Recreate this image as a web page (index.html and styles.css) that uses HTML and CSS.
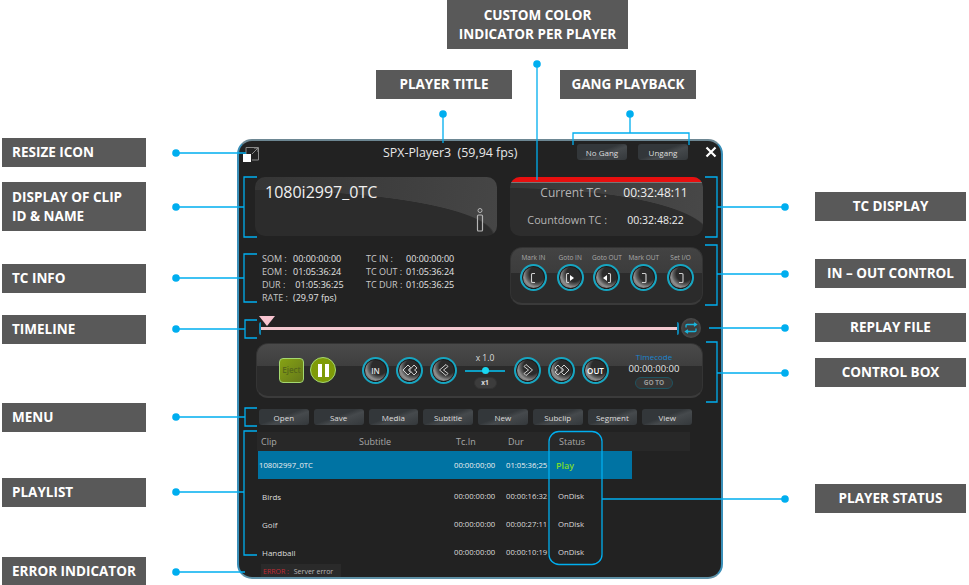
FILE: index.html
```html
<!DOCTYPE html>
<html lang="en">
<head>
  <meta charset="UTF-8">
  <title>SPX Player overview</title>
  <link rel="stylesheet" href="styles.css">
</head>
<body>
<div class="stage">

  <!-- Player window -->
  <div class="player">
    <div class="titlebar">
      <svg class="resize-icon" width="18" height="18" viewBox="0 0 18 18">
        <path d="M3 1.5H15.5V14H9M3 8V1.5M9 8L15 2M11 2H15V6" fill="none" stroke="#8a8a8a" stroke-width="1"/>
        <rect x="0" y="8" width="8" height="8" fill="#fff"/>
      </svg>
      <span class="player-name">SPX-Player3&nbsp; (59,94 fps)</span>
      <button class="btn gang">No Gang</button>
      <button class="btn gang">Ungang</button>
      <svg class="close" width="12" height="12" viewBox="0 0 12 12">
        <path d="M1.5 1.5L10.5 10.5M10.5 1.5L1.5 10.5" stroke="#fff" stroke-width="2.2"/>
      </svg>
    </div>

    <div class="panels">
      <div class="panel clip-panel">
        <span class="clip-name">1080i2997_0TC</span>
        <svg class="info-icon" width="8" height="24" viewBox="0 0 8 24">
          <circle cx="4" cy="2.5" r="2" fill="none" stroke="#b5b5b5" stroke-width="1"/>
          <rect x="1.5" y="7" width="5" height="16" rx="1" fill="none" stroke="#b5b5b5" stroke-width="1.2"/>
        </svg>
      </div>

      <div class="panel tc-panel">
        <div class="color-bar"></div>
        <div class="tc-rows">
          <span class="tc-label big">Current TC :</span><span class="tc-val big">00:32:48:11</span>
          <span class="tc-label">Countdown TC :</span><span class="tc-val">00:32:48:22</span>
        </div>
      </div>

      <div class="tc-info">
        <span>SOM :</span><span>00:00:00:00</span><span>TC IN :</span><span>00:00:00:00</span>
        <span>EOM :</span><span>01:05:36:24</span><span>TC OUT :</span><span>01:05:36:24</span>
        <span>DUR :</span><span>&nbsp;01:05:36:25</span><span>TC DUR :</span><span>01:05:36:25</span>
        <span>RATE :</span><span>(29,97 fps)</span>
      </div>

      <div class="panel inout-panel">
        <div class="inout-item">
          <span>Mark IN</span>
          <div class="round"><svg width="14" height="14" viewBox="0 0 14 14"><path d="M9 2.5H6.500a1 1 0 0 0-1 1v7a1 1 0 0 0 1 1H9" class="glyph"/></svg></div>
        </div>
        <div class="inout-item">
          <span>Goto IN</span>
          <div class="round"><svg width="14" height="14" viewBox="0 0 14 14"><path d="M6 2.500H4.500a1 1 0 0 0-1 1v7a1 1 0 0 0 1 1H6" class="glyph"/><path d="M7 4L11 7L7 10Z" fill="#fff"/></svg></div>
        </div>
        <div class="inout-item">
          <span>Goto OUT</span>
          <div class="round"><svg width="14" height="14" viewBox="0 0 14 14"><path d="M8 2.500h1.500a1 1 0 0 1 1 1v7a1 1 0 0 1-1 1H8" class="glyph"/><path d="M7 4L3 7L7 10Z" fill="#fff"/></svg></div>
        </div>
        <div class="inout-item">
          <span>Mark OUT</span>
          <div class="round"><svg width="14" height="14" viewBox="0 0 14 14"><path d="M5 2.500h3a1 1 0 0 1 1 1v7a1 1 0 0 1-1 1H5" class="glyph"/></svg></div>
        </div>
        <div class="inout-item">
          <span>Set I/O</span>
          <div class="round"><svg width="14" height="14" viewBox="0 0 14 14"><path d="M5 2.500h3a1 1 0 0 1 1 1v7a1 1 0 0 1-1 1H5" class="glyph"/></svg></div>
        </div>
      </div>
    </div>

    <!-- Timeline -->
    <div class="timeline">
      <span class="playhead"></span>
      <span class="cap"></span>
      <span class="track"></span>
      <span class="cap cap-end"></span>
      <div class="replay">
        <svg width="14" height="12" viewBox="0 0 14 12">
          <path d="M2 5.500V3.500a1 1 0 0 1 1-1h9M10 .8L12.500 2.500L10 4.200M12 6.500v2a1 1 0 0 1-1 1H2M4 7.800L1.500 9.500L4 11.200" fill="none" stroke="#19b5dc" stroke-width="1.300"/>
        </svg>
      </div>
    </div>

    <!-- Control box -->
    <div class="control-box">
      <div class="eject">Eject</div>
      <div class="pause"><i></i><i></i></div>
      <div class="round first-transport"><span class="round-text">IN</span></div>
      <div class="round"><svg width="18" height="14" viewBox="0 0 18 14"><path d="M7 2L2 7L7 12L9.500 9.500L7.500 7L9.500 4.500ZM13 2L8.500 7L13 12L16 9L13.500 7L16 5Z" class="glyph thin"/></svg></div>
      <div class="round"><svg width="14" height="14" viewBox="0 0 14 14"><path d="M9 1.500L2.500 7L9 12.500L11 10.500L6.500 7L11 3.500Z" class="glyph thin"/></svg></div>
      <div class="speed">
        <span>x 1.0</span>
        <div class="slider"><b></b></div>
        <span class="pill">x1</span>
      </div>
      <div class="round"><svg width="14" height="14" viewBox="0 0 14 14"><path d="M5 1.500L11.500 7L5 12.500L3 10.500L7.500 7L3 3.500Z" class="glyph thin"/></svg></div>
      <div class="round"><svg width="18" height="14" viewBox="0 0 18 14"><path d="M11 2L16 7L11 12L8.500 9.500L10.500 7L8.500 4.500ZM5 2L9.500 7L5 12L2 9L4.500 7L2 5Z" class="glyph thin"/></svg></div>
      <div class="round"><span class="round-text out">OUT</span></div>
      <div class="timecode">
        <span class="tc-title">Timecode</span>
        <span class="tc-now">00:00:00:00</span>
        <span class="goto">GO TO</span>
      </div>
    </div>

    <!-- Menu -->
    <div class="menu">
      <button class="btn">Open</button>
      <button class="btn">Save</button>
      <button class="btn">Media</button>
      <button class="btn">Subtitle</button>
      <button class="btn">New</button>
      <button class="btn">Subclip</button>
      <button class="btn">Segment</button>
      <button class="btn">View</button>
    </div>

    <!-- Playlist -->
    <div class="playlist">
      <div class="row head">
        <span>Clip</span><span>Subtitle</span><span>Tc.In</span><span>Dur</span><span>Status</span>
      </div>
      <div class="row selected">
        <span>1080i2997_0TC</span><span></span><span>00:00:00;00</span><span>01:05:36;25</span><span class="play">Play</span>
      </div>
      <div class="row item">
        <span>Birds</span><span></span><span>00:00:00:00</span><span>00:00:16:32</span><span>OnDisk</span>
      </div>
      <div class="row item">
        <span>Golf</span><span></span><span>00:00:00:00</span><span>00:00:27:11</span><span>OnDisk</span>
      </div>
      <div class="row item">
        <span>Handball</span><span></span><span>00:00:00:00</span><span>00:00:10:19</span><span>OnDisk</span>
      </div>
    </div>

    <div class="error"><em>ERROR :</em> Server error</div>
  </div>

  <!-- Callout lines drawn over the window -->
  <svg class="callouts" width="969" height="585" viewBox="0 0 969 585">
    <path class="line" d="M176 153H246 M176 207H244 M257 177H244V237H257 M176 278H244 M257 254H244V302H257 M176 329H245 M257 320H245V338H257 M176 417H245 M257 408H245V426H257 M176 492H244 M257 431H244V555H257 M176 572H245"/>
    <path class="line" d="M785 207H717 M705 177H717V237H705 M785 274H717 M705 245H717V305H705 M785 328H709 M785 373H717 M706 342H717V402H706 M785 499H602"/>
    <path class="line" d="M443 114V143 M537 64V180 M630 114V133 M573 145V133H689V145"/>
    <rect class="line" x="549" y="431.500" width="53" height="133" rx="10"/>
    <g class="dots">
      <circle cx="176" cy="153" r="3.800"/><circle cx="176" cy="207" r="3.800"/><circle cx="176" cy="278" r="3.800"/>
      <circle cx="176" cy="329" r="3.800"/><circle cx="176" cy="417" r="3.800"/><circle cx="176" cy="492" r="3.800"/>
      <circle cx="176" cy="572" r="3.800"/>
      <circle cx="785" cy="207" r="3.800"/><circle cx="785" cy="274" r="3.800"/><circle cx="785" cy="328" r="3.800"/>
      <circle cx="785" cy="373" r="3.800"/><circle cx="785" cy="499" r="3.800"/>
      <circle cx="443" cy="114" r="3.800"/><circle cx="537" cy="64" r="3.800"/><circle cx="630" cy="114" r="3.800"/>
    </g>
  </svg>

  <!-- Labels -->
  <div class="label l-custom center">CUSTOM COLOR<br>INDICATOR PER PLAYER</div>
  <div class="label l-title center">PLAYER TITLE</div>
  <div class="label l-gang center">GANG PLAYBACK</div>

  <div class="label l-resize">RESIZE ICON</div>
  <div class="label l-display">DISPLAY OF CLIP<br>ID &amp; NAME</div>
  <div class="label l-tcinfo">TC INFO</div>
  <div class="label l-timeline">TIMELINE</div>
  <div class="label l-menu">MENU</div>
  <div class="label l-playlist">PLAYLIST</div>
  <div class="label l-error">ERROR INDICATOR</div>

  <div class="label side l-tcdisplay">TC DISPLAY</div>
  <div class="label side l-inout">IN – OUT CONTROL</div>
  <div class="label side l-replay">REPLAY FILE</div>
  <div class="label side l-control">CONTROL BOX</div>
  <div class="label side l-status">PLAYER STATUS</div>
</div>
</body>
</html>
```

FILE: styles.css
```css
body {
  margin: 0;
  background-color: #fff;
  font-family: "Open Sans", "Liberation Sans", sans-serif;
}
.stage {
  position: relative;
  width: 969px;
  height: 585px;
  overflow: hidden;
}

/* labels around the window */
.label {
  position: absolute;
  left: 2px;
  width: 144px;
  height: 29px;
  box-sizing: border-box;
  padding-left: 10px;
  background-color: #595959;
  color: #fff;
  font-size: 13.5px;
  font-weight: 700;
  line-height: 19px;
  white-space: nowrap;
  display: flex;
  align-items: center;
}
.label.center {
  justify-content: center;
  text-align: center;
  padding-left: 0;
}
.label.side {
  left: 815px;
  width: 151px;
  padding-left: 0;
  justify-content: center;
}
.l-custom { left: 447px; top: 0; width: 181px; height: 49px; }
.l-title { left: 376px; top: 70px; width: 136px; }
.l-gang { left: 560px; top: 70px; width: 136px; }
.l-resize { top: 138px; }
.l-display { top: 182px; height: 49px; }
.l-tcinfo { top: 264px; }
.l-timeline { top: 315px; }
.l-menu { top: 403px; }
.l-playlist { top: 478px; }
.l-error { top: 557px; }
.l-tcdisplay { top: 192px; }
.l-inout { top: 259px; }
.l-replay { top: 313px; }
.l-control { top: 358px; }
.l-status { top: 484px; }

.callouts {
  position: absolute;
  left: 0;
  top: 0;
  pointer-events: none;
}
.line {
  fill: none;
  stroke: #00aeef;
  stroke-width: 1.3;
}
.dots circle {
  fill: #00aeef;
}

/* player window */
.player {
  position: absolute;
  left: 237px;
  top: 139px;
  width: 486px;
  height: 440px;
  box-sizing: border-box;
  border: 2px solid #3a8fb8;
  border-top-color: #6d8793;
  border-bottom-color: #5f92a8;
  border-radius: 15px;
  background-color: #222;
  color: #d5d5d5;
  overflow: hidden;
}
.titlebar {
  display: flex;
  align-items: center;
  height: 31px;
  padding: 0 0 9px 4px;
  box-sizing: border-box;
}
.resize-icon {
  flex: none;
  margin-top: 5px;
}
.player-name {
  margin-left: 122px;
  width: 194px;
  font-size: 12.4px;
  color: #e8e8e8;
  white-space: nowrap;
}
.close {
  margin-left: 6px;
}
.btn {
  padding: 0;
  height: 16px;
  border: none;
  border-radius: 3px;
  background: linear-gradient(160deg, #33373a 0 45%, #464a4d 60%, #34383b 100%);
  color: #ddd;
  font-family: "Open Sans", "Liberation Sans", sans-serif;
  font-size: 8px;
}
.gang {
  flex: none;
  width: 50px;
  margin-right: 11px;
}

.panels {
  display: grid;
  grid-template-columns: 242px 193px;
  grid-template-rows: 59px 58px;
  column-gap: 13px;
  row-gap: 11px;
  margin: 5px 0 0 16px;
}
.panel {
  border-radius: 10px;
}
.clip-panel {
  display: flex;
  justify-content: space-between;
  padding: 4px 13px 4px 10px;
  box-sizing: border-box;
  background:
    radial-gradient(ellipse 240px 46px at 0 100%, #2c2c2c 99%, transparent 100%),
    linear-gradient(100deg, #353535, #464646);
}
.clip-name {
  font-size: 16px;
  color: #f0f0f0;
  line-height: 22px;
}
.info-icon {
  align-self: flex-end;
}
.tc-panel {
  overflow: hidden;
  background:
    radial-gradient(ellipse 200px 48px at 0 100%, #2d2d2d 99%, transparent 100%),
    linear-gradient(100deg, #383838, #484848);
}
.color-bar {
  height: 5px;
  background-color: #e80f0f;
  border-radius: 6px 6px 0 0;
  border-bottom: 1px solid #777;
}
.tc-rows {
  display: grid;
  grid-template-columns: 97px 96px;
  grid-auto-rows: 27px;
  align-items: center;
  margin-top: -4px;
}
.tc-label {
  text-align: right;
  font-size: 10.8px;
  color: #b5b5b5;
}
.tc-label.big {
  font-size: 12px;
}
.tc-val {
  text-align: center;
  font-size: 10.5px;
  color: #eee;
  padding-left: 1px;
}
.tc-val.big {
  font-size: 12px;
}
.tc-info {
  display: grid;
  grid-template-columns: 31px 73px 40px auto;
  grid-auto-rows: 13px;
  align-items: center;
  padding: 5px 0 0 7px;
  font-size: 9px;
  color: #c8c8c8;
  white-space: nowrap;
}
.tc-info span:nth-child(even) {
  color: #e4e4e4;
}
.inout-panel {
  display: grid;
  grid-template-columns: repeat(5, 1fr);
  padding: 5px 3px 0 4px;
  box-sizing: border-box;
  border: 1px solid #333;
  border-bottom: 2px solid #3a3a3a;
  border-radius: 12px;
  background: linear-gradient(#434343, #3c3c3c 46%, #2b2b2b 46%, #2b2b2b);
}
.inout-item {
  display: flex;
  flex-direction: column;
  align-items: center;
  gap: 2px;
  font-size: 6.5px;
  color: #aaa;
  line-height: 9px;
  white-space: nowrap;
}

/* round cyan buttons */
.round {
  flex: none;
  display: flex;
  align-items: center;
  justify-content: center;
  width: 27px;
  height: 27px;
  box-sizing: border-box;
  border: 2px solid #16a6c2;
  border-radius: 50%;
  box-shadow: inset 0 0 0 1px #1b1b1b;
  background: radial-gradient(circle at 66% 34%, #2b2b2b 0 36%, #5a5a5a 50%, #8f8f8f 62%, #6a6a6a 80%);
}
.glyph {
  fill: none;
  stroke: #d0d0d0;
  stroke-width: 1.1;
}
.glyph.thin {
  stroke-width: 1;
}
.round-text {
  font-size: 8px;
  font-weight: 600;
  color: #e0e0e0;
}
.round-text.out {
  color: #fff;
}

.timeline {
  position: relative;
  display: flex;
  align-items: center;
  height: 24px;
  margin: 11px 0 0 20px;
}
.playhead {
  position: absolute;
  left: 0;
  top: 0;
  border-left: 8px solid transparent;
  border-right: 8px solid transparent;
  border-top: 10px solid #f8c4d0;
}
.cap {
  width: 2px;
  height: 13px;
  flex: none;
  background-color: #0d84b0;
  border-radius: 2px 0 0 2px;
}
.cap-end {
  border-radius: 0 2px 2px 0;
}
.track {
  width: 416px;
  height: 3px;
  background-color: #f3c9d0;
}
.replay {
  display: flex;
  align-items: center;
  justify-content: center;
  width: 20px;
  height: 20px;
  margin-left: 2px;
  border-radius: 50%;
  background: radial-gradient(circle at 50% 50%, #3c3c3c 50%, #5f5f5f 100%);
}

.control-box {
  display: flex;
  align-items: center;
  width: 447px;
  height: 55px;
  margin: 3px 0 0 17px;
  padding-left: 22px;
  box-sizing: border-box;
  border: 1px solid #343434;
  border-bottom: 2px solid #3b3b3b;
  border-radius: 12px;
  background: linear-gradient(#4a4a4a, #3e3e3e 43%, #2b2b2b 43%, #2b2b2b);
  gap: 7px;
}
.eject {
  width: 25px;
  height: 25px;
  box-sizing: border-box;
  border: 1.5px solid #a4d870;
  border-radius: 4px;
  background: linear-gradient(135deg, #86a214, #64781a);
  color: #56681a;
  font-size: 8px;
  font-weight: 600;
  line-height: 22px;
  text-align: center;
}
.pause {
  display: flex;
  align-items: center;
  justify-content: center;
  gap: 3px;
  width: 26px;
  height: 26px;
  margin-left: -1px;
  box-sizing: border-box;
  border: 1.5px solid #a4d870;
  border-radius: 50%;
  background-color: #7f9b08;
}
.pause i {
  width: 4px;
  height: 13px;
  background-color: #fff;
}
.first-transport {
  margin-left: 19px;
}
.speed {
  display: flex;
  flex-direction: column;
  align-items: center;
  width: 40px;
  margin: 0 2px 0 1px;
  font-size: 8.5px;
  line-height: 12px;
  color: #ddd;
}
.slider {
  position: relative;
  align-self: stretch;
  height: 2px;
  margin: 6px 0 5px;
  background-color: #0d9fc4;
}
.slider b {
  position: absolute;
  left: 17px;
  top: -2.5px;
  width: 7px;
  height: 7px;
  border-radius: 50%;
  background-color: #19d6f0;
}
.pill {
  width: 23px;
  height: 12px;
  border-radius: 6px;
  background-color: #3c3c3c;
  border: 1px solid #333;
  box-sizing: border-box;
  font-size: 6.5px;
  line-height: 10px;
  font-weight: 700;
  text-align: center;
}
.timecode {
  display: flex;
  flex-direction: column;
  align-items: center;
  width: 60px;
  margin-left: 8px;
}
.tc-title {
  font-size: 8px;
  line-height: 11px;
  color: #1a86d0;
}
.tc-now {
  font-size: 9.5px;
  line-height: 13px;
  color: #e8e8e8;
}
.goto {
  width: 38px;
  height: 12px;
  margin-top: 2px;
  border: 1px solid #1f5360;
  border-radius: 6px;
  box-sizing: border-box;
  background-color: #363636;
  color: #999;
  font-size: 6.5px;
  font-weight: 700;
  line-height: 10px;
  text-align: center;
}

.menu {
  display: grid;
  grid-template-columns: repeat(8, 1fr);
  column-gap: 5px;
  width: 433px;
  margin: 11px 0 0 20px;
}

.playlist {
  margin: 7px 0 0 18px;
  width: 433px;
  font-size: 7.7px;
}
.row {
  display: grid;
  grid-template-columns: 98px 97px 52px 51px 1fr;
  white-space: nowrap;
  color: #ddd;
}
.row.head {
  height: 19px;
  align-items: center;
  background-color: #282828;
  color: #a8a8a8;
  font-size: 9px;
}
.row.head span {
  padding-left: 4px;
}
.row.selected {
  height: 28px;
  width: 374px;
  margin-left: 1px;
  align-items: center;
  background-color: #0073a3;
  color: #f0f0f0;
}
.row.selected span {
  padding-left: 1px;
}
.row.selected .play {
  padding-left: 0;
  color: #7ddc2e;
  font-size: 9px;
  font-weight: 600;
}
.row.item {
  height: 28px;
  padding-top: 6px;
  box-sizing: border-box;
  align-items: center;
}
.row.item span {
  padding-left: 2px;
}
.row.item span:first-child {
  padding-left: 5px;
  font-size: 8px;
}
.row.item span:last-child {
  padding-left: 3px;
}
.error {
  width: 80px;
  height: 14px;
  margin: 1px 0 0 22px;
  padding-left: 2px;
  box-sizing: border-box;
  background-color: #2a2a2a;
  font-size: 7px;
  line-height: 15px;
  color: #bbb;
  white-space: nowrap;
}
.error em {
  font-style: normal;
  color: #c22a35;
  margin-right: 3px;
}
```
